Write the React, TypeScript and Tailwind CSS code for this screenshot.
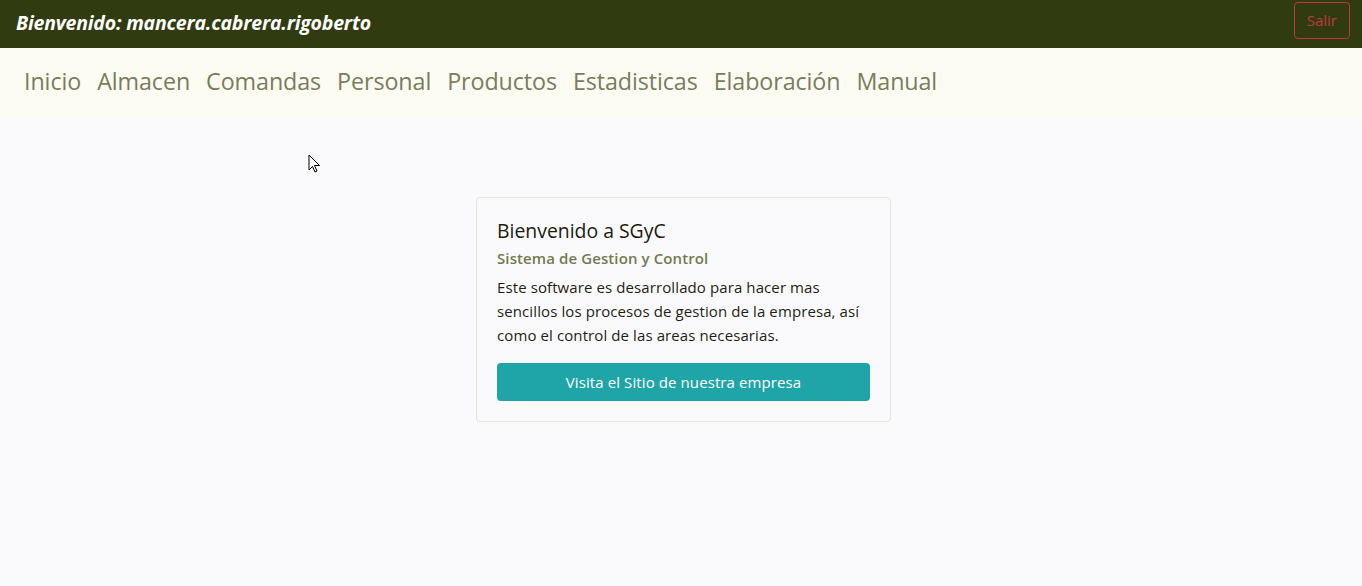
import React from 'react';

const links = ['Inicio', 'Almacen', 'Comandas', 'Personal', 'Productos', 'Estadisticas', 'Elaboración', 'Manual'];

const App: React.FC = () => {
  return (
    <div className="relative min-h-[586px] w-full bg-[#fafafc] font-['Open_Sans',sans-serif] overflow-hidden">
      {/* Top bar */}
      <div className="h-12 bg-[#303b10] flex items-center justify-between pl-4 pr-3">
        <span className="text-white text-[19.5px] font-bold italic tracking-[-0.2px] -mt-[3px]">Bienvenido: mancera.cabrera.rigoberto</span>
        <button className="h-[37px] -mt-[8px] px-[12px] border border-[#c0393f] rounded text-[#c0393f] text-[15px]">Salir</button>
      </div>

      {/* Nav */}
      <nav className="h-[70px] bg-[#fcfcf3] flex items-center gap-[16px] pl-6 pb-[4px]">
        {links.map(l => (
          <a key={l} className="text-[23.3px] text-[#7a7c5c] font-medium tracking-[-0.1px]">{l}</a>
        ))}
      </nav>

      {/* Card */}
      <div className="flex justify-center pt-[79px] pl-[5px]">
        <div className="w-[415px] bg-[#fafafc] border border-[#e4e4d8] rounded p-5 pt-[18px]">
          <h2 className="text-[19.4px] text-[#1b1b10] font-medium leading-7 mt-[1px]">Bienvenido a SGyC</h2>
          <h3 className="text-[15px] text-[#737a4e] font-semibold leading-6 mt-[1px] tracking-[0.1px]">Sistema de Gestion y Control</h3>
          <p className="text-[15px] text-[#1e1e15] leading-6 mt-[5px] tracking-[0.1px]">
            Este software es desarrollado para hacer mas sencillos los procesos de gestion de la empresa, así como el control de las areas necesarias.
          </p>
          <button className="mt-[16px] w-full h-[38px] rounded bg-[#1fa4a7] text-white text-[15px] tracking-[0.1px]">Visita el Sitio de nuestra empresa</button>
        </div>
      </div>

      {/* cursor */}
      <svg className="absolute left-[308px] top-[154px]" width="13" height="20" viewBox="0 0 13 20">
        <path d="M1 1 L1 16 L4.5 12.5 L7 18 L9 17 L6.5 11.5 L11.5 11.5 Z" fill="white" stroke="black" strokeWidth="1" />
      </svg>
    </div>
  );
};

export default App;
